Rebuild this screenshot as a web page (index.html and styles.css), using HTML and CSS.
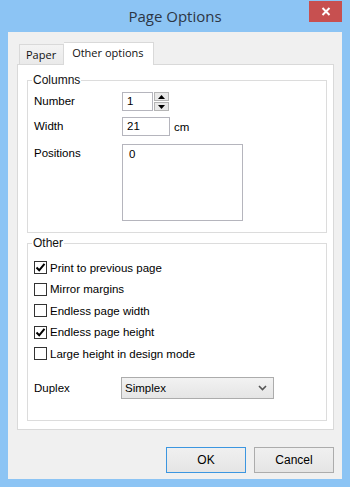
FILE: index.html
```html
<!DOCTYPE html>
<html>
<head>
    <meta charset="UTF-8">
    <meta name="viewport" content="width=device-width, initial-scale=1.0">
    <title>Page Options</title>
    <link rel="stylesheet" href="styles.css">
</head>
<body>
    <div class="window">
        <div class="titlebar">
            <span></span>
            <span class="title">Page Options</span>
            <button class="close" aria-label="Close">
                <svg width="10" height="9" viewBox="0 0 10 9">
                    <path d="M1.5 1 L8.5 8 M8.5 1 L1.5 8" stroke="#fff" stroke-width="2" fill="none"/>
                </svg>
            </button>
        </div>

        <div class="client">
            <div class="tabs">
                <div class="tab">Paper</div>
                <div class="tab active">Other options</div>
            </div>

            <div class="panel">
                <fieldset class="group columns">
                    <legend>Columns</legend>
                    <div class="form-grid">
                        <label>Number</label>
                        <div class="field">
                            <div class="input num">1</div>
                            <div class="spin">
                                <span class="spin-btn"><svg width="7" height="4" viewBox="0 0 7 4"><path d="M0 4 L3.5 0 L7 4 Z" fill="#000"/></svg></span>
                                <span class="spin-btn"><svg width="7" height="4" viewBox="0 0 7 4"><path d="M0 0 L3.5 4 L7 0 Z" fill="#000"/></svg></span>
                            </div>
                        </div>

                        <label>Width</label>
                        <div class="field">
                            <div class="input wid">21</div>
                            <span class="unit">cm</span>
                        </div>

                        <label class="top-label">Positions</label>
                        <div class="field area-field">
                            <div class="input area">0</div>
                        </div>
                    </div>
                </fieldset>

                <fieldset class="group other">
                    <legend>Other</legend>
                    <div class="checks">
                        <div class="check"><span class="box"><svg width="11" height="11" viewBox="0 0 11 11"><path d="M1.5 5.5 L4.2 8.3 L9.5 1.8" stroke="#000" stroke-width="2" fill="none"/></svg></span>Print to previous page</div>
                        <div class="check"><span class="box"></span>Mirror margins</div>
                        <div class="check"><span class="box"></span>Endless page width</div>
                        <div class="check"><span class="box"><svg width="11" height="11" viewBox="0 0 11 11"><path d="M1.5 5.5 L4.2 8.3 L9.5 1.8" stroke="#000" stroke-width="2" fill="none"/></svg></span>Endless page height</div>
                        <div class="check"><span class="box"></span>Large height in design mode</div>
                    </div>
                    <div class="duplex">
                        <label>Duplex</label>
                        <div class="select">
                            <span>Simplex</span>
                            <svg width="9" height="6" viewBox="0 0 9 6"><path d="M1 1 L4.5 4.5 L8 1" stroke="#555" stroke-width="1.6" fill="none"/></svg>
                        </div>
                    </div>
                </fieldset>
            </div>

            <div class="buttons">
                <button class="btn default">OK</button>
                <button class="btn">Cancel</button>
            </div>
        </div>
    </div>
</body>
</html>
```

FILE: styles.css
```css
html, body {
    margin: 0;
    padding: 0;
}

body {
    width: 350px;
    height: 487px;
    background-color: #8cc4f4;
    font-family: "Liberation Sans", Arial, sans-serif;
    font-size: 11.5px;
    color: #000;
    overflow: hidden;
}

.window {
    height: 487px;
    box-sizing: border-box;
    padding: 0 8px;
}

.titlebar {
    height: 32px;
    display: grid;
    grid-template-columns: 1fr auto 1fr;
    align-items: start;
}

.title {
    font-family: "Open Sans", "Noto Sans", sans-serif;
    font-size: 15px;
    color: #2d3644;
    line-height: 32px;
}

.close {
    justify-self: end;
    margin-top: 1px;
    width: 33px;
    height: 21px;
    border: none;
    padding: 0;
    background-color: #c75050;
    display: flex;
    align-items: center;
    justify-content: center;
}

.client {
    height: 447px;
    background-color: #f0f0f0;
    box-sizing: border-box;
    padding: 10px 8px 0 9px;
}

.tabs {
    display: flex;
    align-items: flex-end;
    padding-left: 2px;
    height: 22px;
    font-family: "Open Sans", "Noto Sans", sans-serif;
    font-size: 11px;
}

.tab {
    height: 20px;
    box-sizing: border-box;
    padding: 0 7px 0 6px;
    line-height: 20px;
    border: 1px solid #d9d9d9;
    border-bottom: none;
    background: linear-gradient(#f3f3f3, #eaeaea);
    color: #111;
}

.tab.active {
    height: 23px;
    margin-bottom: -1px;
    line-height: 20px;
    background: #fff;
    border-left: none;
    padding: 0 9px 0 8px;
}

.panel {
    height: 366px;
    box-sizing: border-box;
    background-color: #fff;
    border: 1px solid #d9d9d9;
    padding: 8px 6px 0 9px;
}

.group {
    margin: 0;
    border: 1px solid #dcdcdc;
    padding: 0 6px;
    min-width: 0;
}

.group legend {
    padding: 0 1px;
    margin-left: -2px;
    font-size: 12px;
    line-height: 14px;
    color: #111;
}

.columns {
    padding-top: 5px;
    padding-bottom: 11px;
}

.form-grid {
    display: grid;
    grid-template-columns: 88px 1fr;
    grid-template-rows: 19px 19px 79px;
    row-gap: 6px;
}

.form-grid label {
    line-height: 19px;
}

.form-grid .top-label {
    margin-top: 4px;
    line-height: 14px;
}

.field {
    display: flex;
    align-items: center;
    gap: 4px;
}

.area-field {
    align-items: flex-end;
}

.input {
    box-sizing: border-box;
    border: 1px solid #b5b5bd;
    background: #fff;
    height: 19px;
    line-height: 17px;
    padding: 0 4px;
}

.num {
    width: 31px;
}

.wid {
    width: 48px;
}

.area {
    width: 121px;
    height: 77px;
    padding: 2px 6px;
    line-height: 14px;
}

.spin {
    display: flex;
    flex-direction: column;
    gap: 1px;
    margin-left: -3px;
}

.spin-btn {
    width: 15px;
    height: 9px;
    box-sizing: border-box;
    border: 1px solid #b5b5b5;
    background: #e9e9e9;
    display: flex;
    align-items: center;
    justify-content: center;
}

.other {
    margin-top: 3px;
    padding-top: 7px;
    padding-bottom: 21px;
}

.checks {
    display: flex;
    flex-direction: column;
}

.check {
    height: 21.5px;
    display: flex;
    align-items: center;
    gap: 3px;
}

.box {
    width: 13px;
    height: 13px;
    box-sizing: border-box;
    border: 1px solid #333;
    background: #fff;
    display: flex;
    align-items: center;
    justify-content: center;
}

.duplex {
    margin-top: 12px;
    display: grid;
    grid-template-columns: 87px 1fr;
    align-items: center;
}

.select {
    width: 153px;
    height: 22px;
    box-sizing: border-box;
    border: 1px solid #acacac;
    background: linear-gradient(#f2f2f2, #e5e5e5);
    display: flex;
    align-items: center;
    justify-content: space-between;
    padding: 0 6px 0 3px;
}

.buttons {
    display: flex;
    justify-content: flex-end;
    gap: 8px;
    margin-top: 17px;
}

.btn {
    width: 80px;
    height: 26px;
    font-family: "Liberation Sans", Arial, sans-serif;
    font-size: 12px;
    color: #000;
    border: 1px solid #acacac;
    background: linear-gradient(#f0f0f0, #e5e5e5);
    padding: 0;
}

.btn.default {
    border-color: #3c96e0;
}
```
